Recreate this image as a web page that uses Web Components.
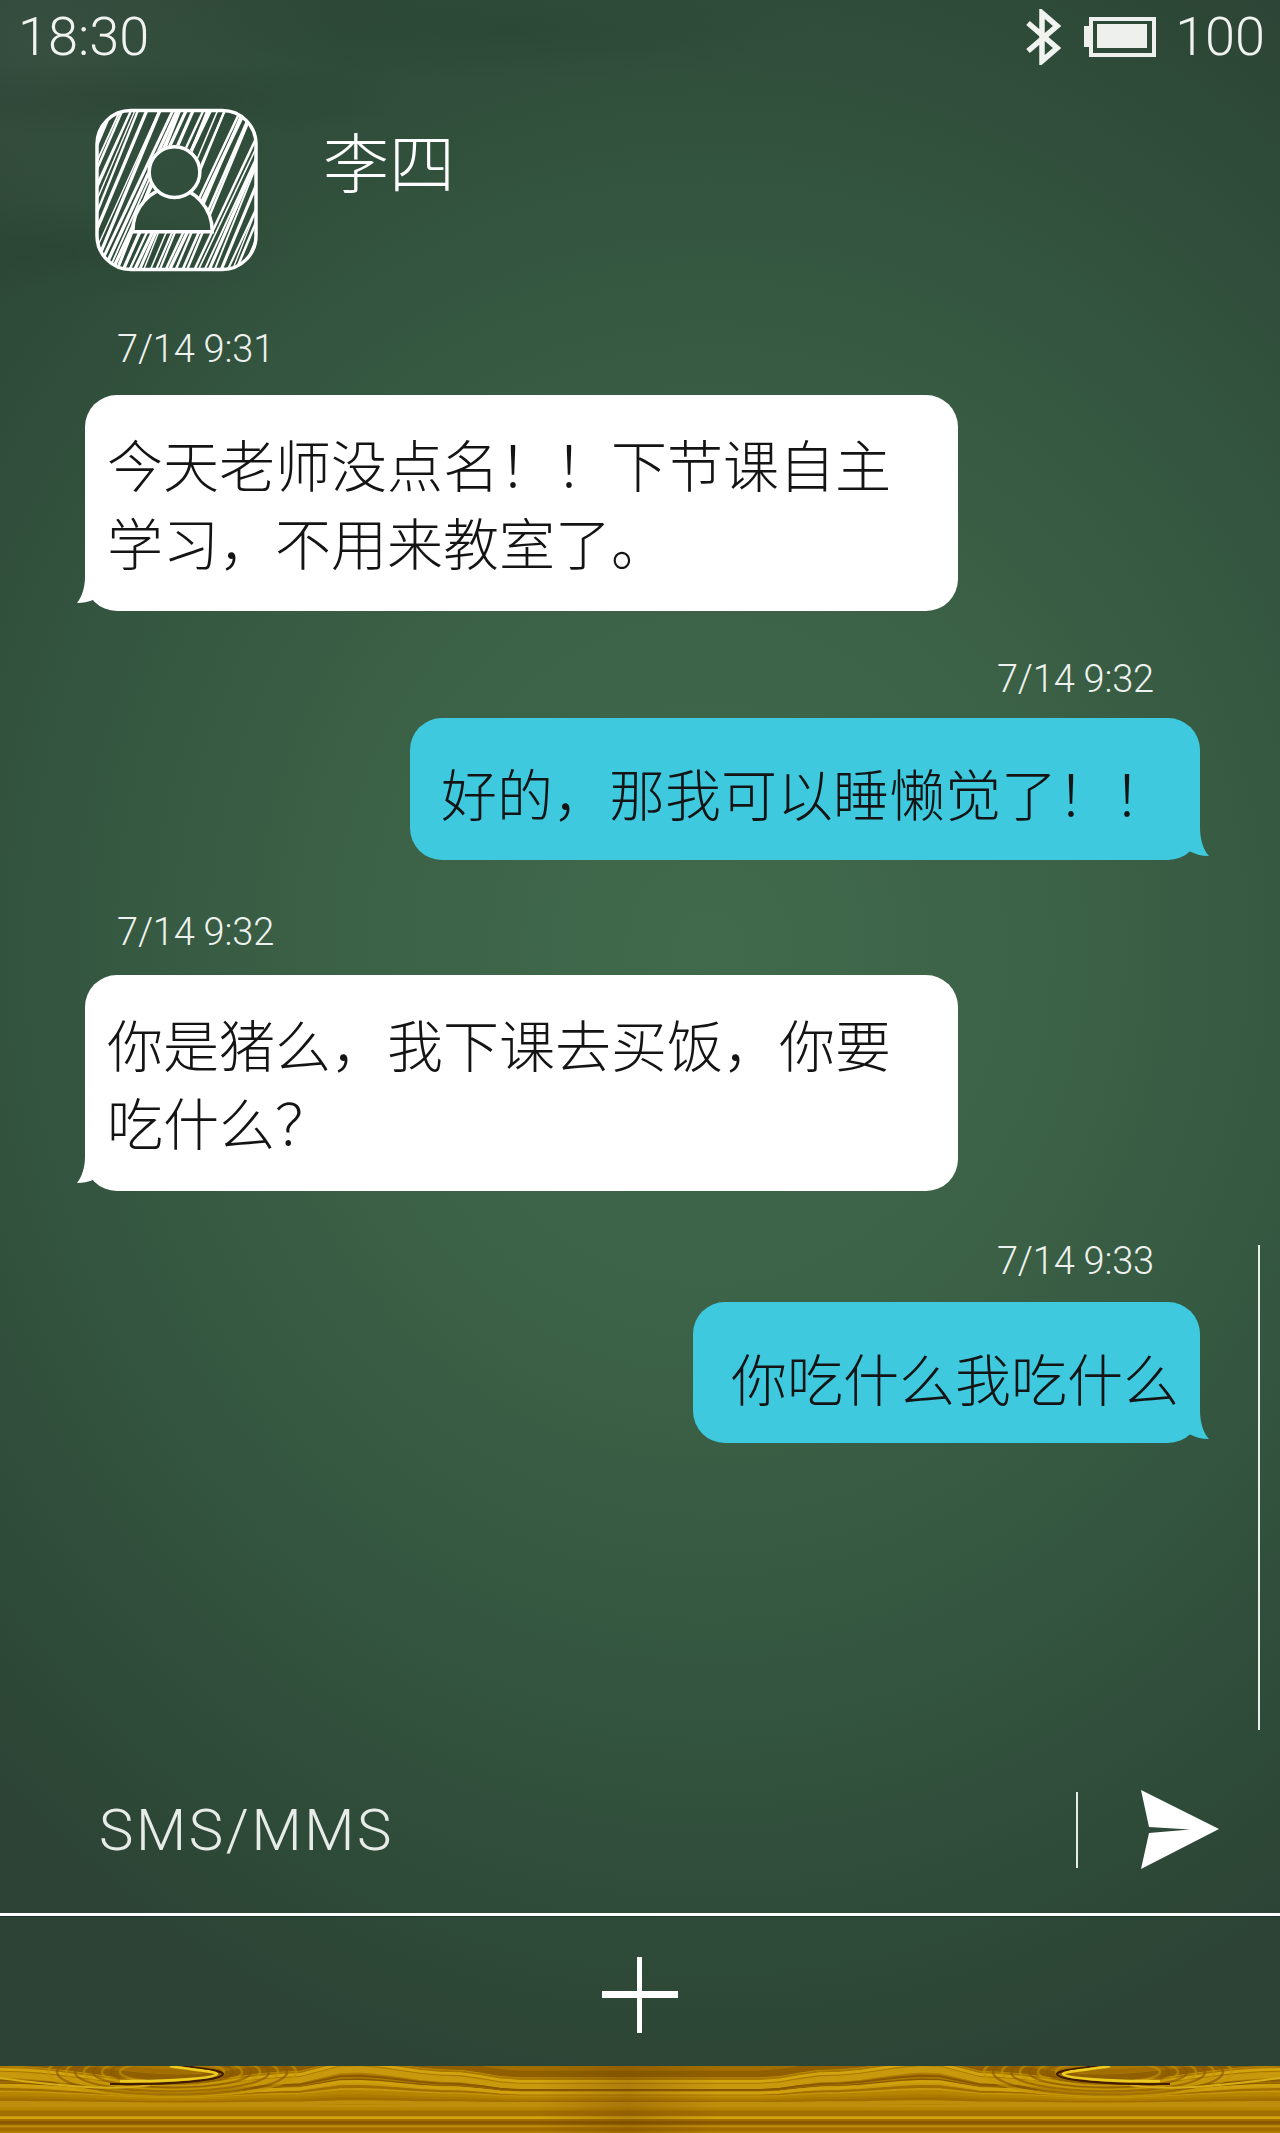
<!DOCTYPE html>
<html lang="zh">
<head>
<meta charset="utf-8">
<title>李四</title>
<style>
  html, body { margin: 0; padding: 0; }
  body { font-family: Roboto, "Noto Sans CJK SC", sans-serif; }
</style>
</head>
<body>
<phone-app>
  <status-bar slot="top" time="18:30" level="100"></status-bar>
  <contact-header slot="top" name="李四"></contact-header>

  <chat-message time="7/14 9:31" bubble-width="873" pad="29px 20px 31px 22px" time-gap="26">今天老师没点名！！下节课自主学习，不用来教室了。</chat-message>
  <chat-message side="right" time="7/14 9:32" bubble-width="790" pad="35px 20px 29px 31px" time-gap="19" style="margin-top:48px">好的，那我可以睡懒觉了！！</chat-message>
  <chat-message time="7/14 9:32" bubble-width="873" pad="29px 20px 31px 22px" time-gap="23" style="margin-top:52px">你是猪么，我下课去买饭，你要吃什么？</chat-message>
  <chat-message side="right" time="7/14 9:33" bubble-width="507" pad="36px 10px 27px 38px" time-gap="21" style="margin-top:50px">你吃什么我吃什么</chat-message>

  <message-composer slot="bottom" placeholder="SMS/MMS"></message-composer>
  <add-bar slot="bottom"></add-bar>
  <wood-strip slot="bottom"></wood-strip>
</phone-app>

<script>
// 整个页面的外框和黑板背景
class PhoneApp extends HTMLElement {
    constructor() {
        super();
        this.attachShadow({ mode: 'open' });
        this.shadowRoot.innerHTML = `
            <style>
                :host {
                    display: flex;
                    flex-direction: column;
                    width: 1280px;
                    height: 2133px;
                    overflow: hidden;
                    position: relative;
                    color: #fff;
                    background:
                        radial-gradient(ellipse 260px 40px at 150px 100px, rgba(38,62,47,.45), rgba(38,62,47,0)),
                        radial-gradient(ellipse 240px 50px at 70px 250px, rgba(38,62,47,.4), rgba(38,62,47,0)),
                        radial-gradient(ellipse 300px 50px at 520px 30px, rgba(38,62,47,.35), rgba(38,62,47,0)),
                        radial-gradient(ellipse 300px 260px at 40px 40px, rgba(90,120,100,.22), rgba(90,120,100,0)),
                        radial-gradient(ellipse 1050px 1180px at 710px 950px, #416a4c 0%, #3b6146 35%, #345640 62%, #2e4a38 85%, #2c4335 100%);
                }
                #chat {
                    flex: 1;
                    display: flex;
                    flex-direction: column;
                    padding-top: 57px;
                    min-height: 0;
                    position: relative;
                }
                #scroll {
                    position: absolute;
                    right: 20px;
                    top: 973px;
                    width: 2px;
                    height: 485px;
                    background: #e8eeea;
                }
            </style>
            <slot name="top"></slot>
            <div id="chat">
                <slot></slot>
                <div id="scroll"></div>
            </div>
            <slot name="bottom"></slot>
        `;
    }
}

// 顶部状态栏
class StatusBar extends HTMLElement {
    constructor() {
        super();
        this.attachShadow({ mode: 'open' });
        const time = this.getAttribute('time');
        const level = this.getAttribute('level');
        this.shadowRoot.innerHTML = `
            <style>
                :host {
                    display: flex;
                    align-items: center;
                    height: 74px;
                    padding: 0 15px 0 18px;
                    font: 300 54px/74px Roboto, sans-serif;
                    color: #f1f3f1;
                }
                #time { flex: 1; }
                svg { display: block; }
                #bt { margin-right: 23px; }
                #batt { margin-right: 19px; }
            </style>
            <span id="time">${time}</span>
            <svg id="bt" width="36" height="56" viewBox="0 0 36 56" fill="none" stroke="#f1f3f1" stroke-width="5.5">
                <path d="M3 14 L32 39 L17 52 V4 L32 17 L3 42"/>
            </svg>
            <svg id="batt" width="72" height="40" viewBox="0 0 72 40">
                <rect x="0" y="9" width="8" height="21" fill="#eef0ee"/>
                <rect x="7" y="2" width="63" height="36" fill="none" stroke="#eef0ee" stroke-width="4"/>
                <rect x="13" y="7" width="50" height="24" fill="#eef0ee"/>
            </svg>
            <span>${level}</span>
        `;
    }
}

// 联系人头像（铅笔排线效果）和名字
class ContactHeader extends HTMLElement {
    constructor() {
        super();
        this.attachShadow({ mode: 'open' });
        const name = this.getAttribute('name');
        let seed = 11;
        const rnd = () => {
            seed = (seed * 16807) % 2147483647;
            return seed / 2147483647;
        };
        let hatch = '';
        let x = -80;
        while (x < 170) {
            const w = 1.4 + rnd() * 2;
            const lean = 66 + rnd() * 14;
            hatch += `<line x1="${x.toFixed(1)}" y1="166" x2="${(x + lean).toFixed(1)}" y2="-2" stroke-width="${w.toFixed(1)}"/>`;
            x += 3.4 + rnd() * 4;
        }
        this.shadowRoot.innerHTML = `
            <style>
                :host {
                    display: flex;
                    align-items: flex-start;
                    gap: 65px;
                    height: 198px;
                    padding: 34px 0 0 95px;
                    box-sizing: border-box;
                }
                svg { display: block; flex: none; }
                #name {
                    font: 300 66px/66px "Noto Sans CJK SC", sans-serif;
                    margin-top: 18px;
                    color: #fff;
                }
            </style>
            <svg width="163" height="164" viewBox="0 0 164 164">
                <defs>
                    <clipPath id="box"><rect x="2" y="2" width="160" height="160" rx="34"/></clipPath>
                    <mask id="hole" maskUnits="userSpaceOnUse" x="0" y="0" width="164" height="164">
                        <rect width="164" height="164" fill="#fff"/>
                        <circle cx="80" cy="64" r="27" fill="#000"/>
                        <path d="M38 124 A40 44 0 0 1 118 124 Z" fill="#000"/>
                    </mask>
                    <mask id="nohead" maskUnits="userSpaceOnUse" x="0" y="0" width="164" height="164">
                        <rect width="164" height="164" fill="#fff"/>
                        <circle cx="80" cy="64" r="27" fill="#000"/>
                    </mask>
                </defs>
                <g clip-path="url(#box)">
                    <g mask="url(#hole)" stroke="#fff" fill="none">${hatch}</g>
                </g>
                <rect x="2" y="2" width="160" height="160" rx="34" fill="none" stroke="#fff" stroke-width="3.5"/>
                <circle cx="80" cy="64" r="25.5" fill="none" stroke="#fff" stroke-width="3.5"/>
                <path d="M38 124 A40 44 0 0 1 118 124 Z" fill="none" stroke="#fff" stroke-width="3.5" mask="url(#nohead)"/>
            </svg>
            <span id="name">${name}</span>
        `;
    }
}

// 一条短信：时间 + 气泡
class ChatMessage extends HTMLElement {
    constructor() {
        super();
        this.attachShadow({ mode: 'open' });
        const right = this.getAttribute('side') === 'right';
        const time = this.getAttribute('time');
        const width = this.getAttribute('bubble-width');
        const pad = this.getAttribute('pad');
        const gap = this.getAttribute('time-gap');
        const tail = right
            ? `<svg id="tail" width="24" height="36" viewBox="0 0 24 36"><path d="M14 4 C14 14 17 26 23 32 C15 32 9 30 3 27 L0 10 Z" fill="#3ec9de"/></svg>`
            : `<svg id="tail" width="24" height="36" viewBox="0 0 24 36"><path d="M9 2 C9 12 6 22 1 28 C7 28 12 27 17 25 L20 10 Z" fill="#fff"/></svg>`;
        this.shadowRoot.innerHTML = `
            <style>
                :host {
                    display: flex;
                    flex-direction: column;
                    align-items: ${right ? 'flex-end' : 'flex-start'};
                    margin: ${right ? '0 80px 0 0' : '0 0 0 85px'};
                }
                #time {
                    font: 300 38px/40px Roboto, sans-serif;
                    color: #eef2ef;
                    margin: ${right ? '0 46px 0 0' : '0 0 0 32px'};
                    margin-bottom: ${gap}px;
                    letter-spacing: -0.2px;
                }
                #bubble {
                    position: relative;
                    box-sizing: border-box;
                    width: ${width}px;
                    padding: ${pad};
                    border-radius: 32px;
                    background: ${right ? '#3ec9de' : '#fff'};
                    color: #141414;
                    font: 300 56px/78px "Noto Sans CJK SC", sans-serif;
                }
                #tail {
                    position: absolute;
                    bottom: 0;
                    ${right ? 'right: -10px;' : 'left: -9px;'}
                }
            </style>
            <div id="time">${time}</div>
            <div id="bubble">${tail}<slot></slot></div>
        `;
    }
}

// 底部输入框
class MessageComposer extends HTMLElement {
    constructor() {
        super();
        this.attachShadow({ mode: 'open' });
        const placeholder = this.getAttribute('placeholder');
        this.shadowRoot.innerHTML = `
            <style>
                :host {
                    display: flex;
                    align-items: center;
                    padding: 0 60px 26px 99px;
                    box-sizing: border-box;
                    height: 143px;
                    border-bottom: 3px solid #fff;
                    box-shadow: 0 1px 0 rgba(20,40,30,.6);
                }
                #hint {
                    flex: 1;
                    font: 300 58px/60px Roboto, sans-serif;
                    letter-spacing: 2.6px;
                    color: #e8ece9;
                }
                #sep {
                    width: 2px;
                    height: 76px;
                    background: #e8ece9;
                    margin-right: 62px;
                }
                svg { display: block; }
            </style>
            <span id="hint">${placeholder}</span>
            <div id="sep"></div>
            <svg width="80" height="82" viewBox="0 0 80 82">
                <path d="M1 1 L79 40 L1 80 L9 44 L50 40.5 L9 38 Z" fill="#fff"/>
            </svg>
        `;
    }
}

// 加号按钮那一栏
class AddBar extends HTMLElement {
    constructor() {
        super();
        this.attachShadow({ mode: 'open' });
        this.shadowRoot.innerHTML = `
            <style>
                :host {
                    display: flex;
                    align-items: center;
                    justify-content: center;
                    box-sizing: border-box;
                    height: 150px;
                    padding-top: 8px;
                }
                svg { display: block; }
            </style>
            <svg width="76" height="76" viewBox="0 0 76 76" fill="#fff">
                <rect x="0" y="34" width="76" height="7"/>
                <rect x="35" y="0" width="5" height="76"/>
            </svg>
        `;
    }
}

// 最下面的木纹条
class WoodStrip extends HTMLElement {
    constructor() {
        super();
        this.attachShadow({ mode: 'open' });
        const pts = [[0, 8], [180, 24], [290, 14], [350, 2], [450, 12], [520, 20], [640, 20]];
        const bend = (u) => {
            for (let i = 1; i < pts.length; i++) {
                if (u <= pts[i][0]) {
                    const t = (u - pts[i - 1][0]) / (pts[i][0] - pts[i - 1][0]);
                    const s = (1 - Math.cos(t * Math.PI)) / 2;
                    return pts[i - 1][1] + (pts[i][1] - pts[i - 1][1]) * s;
                }
            }
            return 20;
        };
        const rowPath = (y0) => {
            const fade = Math.max(0, Math.min(1, (40 - y0) / 40));
            let d = '';
            for (let x = 0; x <= 1280; x += 20) {
                const u = Math.min(x, 1280 - x);
                d += `${x === 0 ? 'M' : 'L'}${x} ${(y0 + bend(u) * fade).toFixed(1)}`;
            }
            return d;
        };
        const colors = ['#a26e03', '#c08e08', '#ad7a04', '#d3a40e', '#8a5802', '#b78404', '#c7970a'];
        let seed = 29;
        const rnd = () => {
            seed = (seed * 16807) % 2147483647;
            return seed / 2147483647;
        };
        let rows = '';
        let y0 = -30;
        while (y0 < 70) {
            const c = colors[Math.floor(rnd() * colors.length)];
            const w = 2 + rnd() * 3;
            rows += `<path d="${rowPath(y0)}" stroke="${c}" stroke-width="${w.toFixed(1)}"/>`;
            y0 += 2 + rnd() * 2.4;
        }
        // 几条明显的波浪纹
        const ribbons = `
            <path d="${rowPath(-12)}" stroke="#8f5e02" stroke-width="7"/>
            <path d="${rowPath(2)}" stroke="#c9990a" stroke-width="5"/>
            <path d="${rowPath(8)}" stroke="#8a5802" stroke-width="2"/>
            <path d="${rowPath(14)}" stroke="#d0a00c" stroke-width="3"/>`;
        let rings = '';
        for (let r = 52; r <= 130; r += 9) {
            const c = r % 2 ? '#8a5802' : '#c49408';
            rings += `<ellipse cx="172" cy="6" rx="${r}" ry="${(r * 0.2).toFixed(1)}" stroke="${c}" stroke-width="2.4" opacity=".65"/>`;
        }
        const knot = `
            <g fill="none" filter="url(#soft)">
                ${rings}
                <path d="M0 12 C60 20 110 25 150 19" stroke="#d8ae14" stroke-width="2"/>
                <path d="M180 -1 C200 3 222 4 223 8 C222 14 175 19 110 18" stroke="#3f1c00" stroke-width="2.2"/>
                <path d="M170 0 C190 4 216 5 217 8 C215 12 170 16 120 15" stroke="#eccb20" stroke-width="2.6"/>
            </g>`;
        this.shadowRoot.innerHTML = `
            <style>
                :host { display: block; height: 67px; background: #a87800; overflow: hidden; }
                svg { display: block; }
            </style>
            <svg width="1280" height="67" viewBox="0 0 1280 67">
                <defs>
                    <filter id="soft" x="-10%" y="-20%" width="120%" height="140%"><feGaussianBlur stdDeviation="0.5"/></filter>
                    <linearGradient id="mid" x1="0" x2="1" y1="0" y2="0">
                        <stop offset=".42" stop-color="#6a3c00" stop-opacity="0"/>
                        <stop offset=".49" stop-color="#6a3c00" stop-opacity=".28"/>
                        <stop offset=".56" stop-color="#6a3c00" stop-opacity="0"/>
                    </linearGradient>
                </defs>
                <g fill="none" filter="url(#soft)">${rows}${ribbons}</g>
                ${knot}
                <g transform="translate(1280 0) scale(-1 1)">${knot}</g>
                <rect width="1280" height="67" fill="url(#mid)"/>
            </svg>
        `;
    }
}

customElements.define('phone-app', PhoneApp);
customElements.define('status-bar', StatusBar);
customElements.define('contact-header', ContactHeader);
customElements.define('chat-message', ChatMessage);
customElements.define('message-composer', MessageComposer);
customElements.define('add-bar', AddBar);
customElements.define('wood-strip', WoodStrip);
</script>
</body>
</html>
